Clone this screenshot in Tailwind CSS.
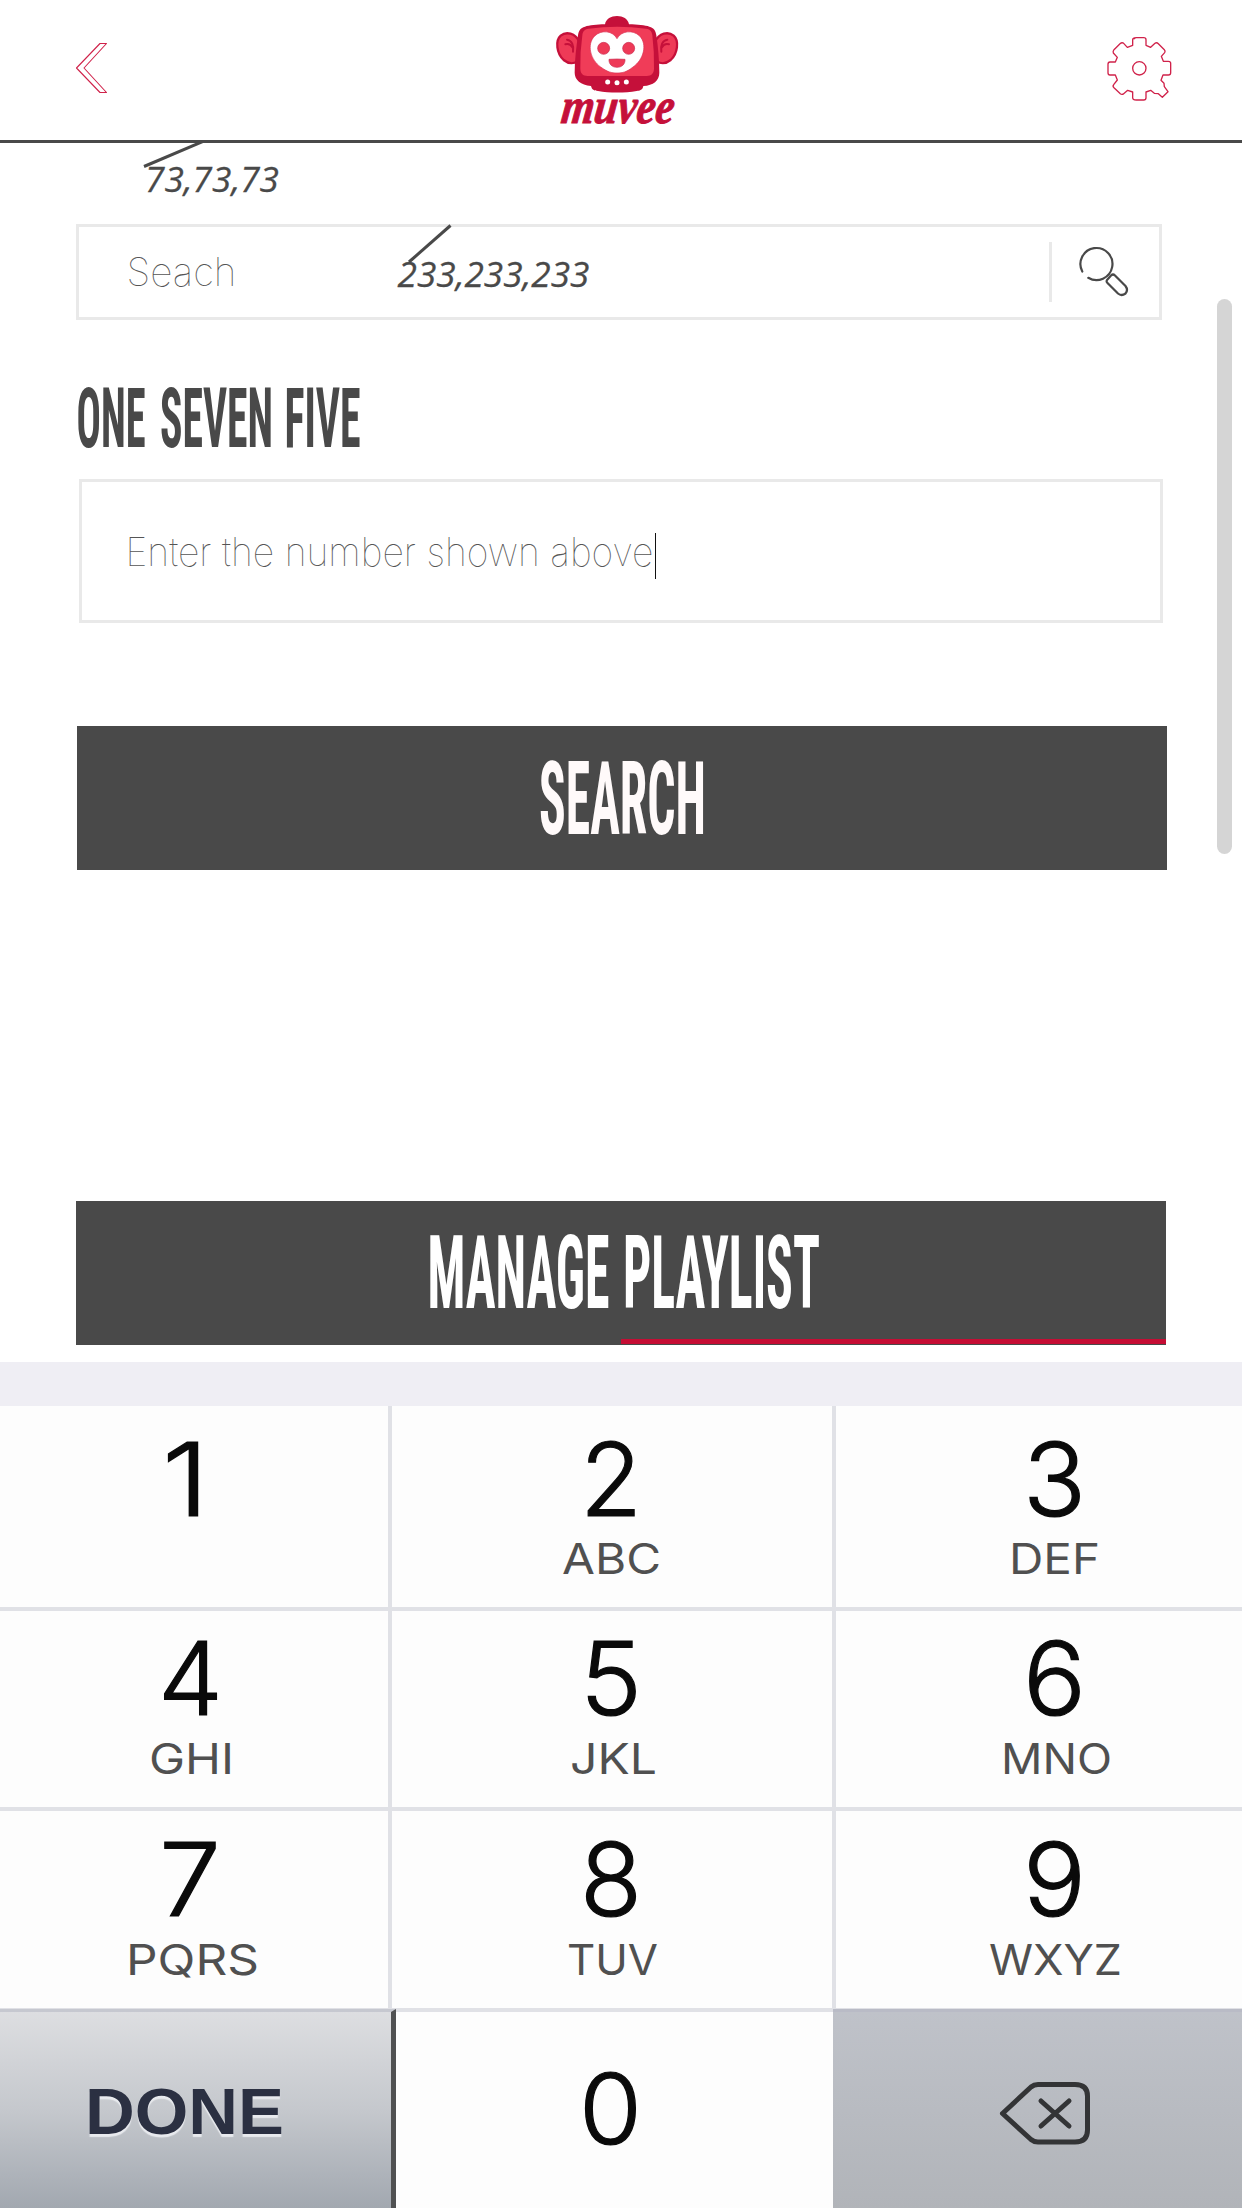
<!DOCTYPE html>
<html lang="en">
<head>
<meta charset="utf-8">
<title>muvee</title>
<script src="https://cdn.jsdelivr.net/npm/@tailwindcss/browser@4"></script>
</head>
<body class="bg-white">
<div class="relative flex h-[2208px] w-[1242px] flex-col overflow-hidden bg-white">

  <!-- Top bar -->
  <header class="flex h-[143px] shrink-0 items-start border-b-[3px] border-[#494949]">
    <svg class="ml-[74px] mt-[40px] h-[56px] w-[36px]" viewBox="74 40 36 56" fill="none" stroke="#d0224a" stroke-width="1.1" stroke-linejoin="round"><path d="M100 43.5H106.500L84 68L106.500 92.500H100L76.500 68Z"/></svg>
    <svg class="ml-[430px] h-[140px] w-[160px]" viewBox="0 0 480 420">
      <g fill="#ee3a57" stroke="#c5103a" stroke-width="7">
        <path d="M118 126C106 98 78 94 62 107C45 122 50 161 71 180C88 194 104 190 112 184Z"/>
        <path d="M345 126C357 98 385 94 401 107C418 122 413 161 392 180C375 194 359 190 351 184Z"/>
      </g>
      <g fill="none" stroke="#c5103a" stroke-width="6" stroke-linecap="round"><path d="M81 119C96 121 102 137 99 155M76 133C87 130 93 134 97 142"/><path d="M382 119C367 121 361 137 364 155M387 133C376 130 370 134 366 142"/></g>
      <path fill="#c5103a" d="M195 73C198 56 213 48 231 48S264 56 267 73C292 73 316 76 328 80C342 84 347 92 349 106C354 140 358 180 358 218C358 242 340 256 310 258C308 270 300 272 290 273C255 279 208 279 174 273C162 272 156 270 153 258C122 254 104 240 104 218C104 180 109 140 114 106C116 92 121 84 135 80C148 76 170 73 195 73Z"/>
      <path fill="#f03c58" d="M146 86Q231 74 318 86C332 88 336 96 337 106Q343 155 342 205C342 221 334 228 320 228H143C128 228 121 221 121 205Q120 155 127 106C128 96 132 88 146 86Z"/>
      <path fill="#fff" stroke="#d92d50" stroke-width="2" d="M231 116C218 92 185 89 165 107C138 133 152 180 182 201C203 216 214 219 231 219S260 216 279 201C310 180 324 133 298 107C278 89 244 92 231 116Z"/>
      <g fill="#ee3a57" stroke="#c92c50" stroke-width="2"><circle cx="191" cy="145" r="18"/><circle cx="266" cy="145" r="18"/><path d="M207 178Q231 176 255 178C256 193 245 202 231 202S206 193 207 178Z"/></g>
      <g fill="#fff"><circle cx="203" cy="246" r="7.500"/><circle cx="231" cy="248" r="7.500"/><circle cx="259" cy="246" r="7.500"/></g>
      <text transform="translate(60 370) skewX(-7)" font-family="Liberation Serif, serif" font-weight="bold" font-style="italic" font-size="150" fill="#c5103a" stroke="#c5103a" stroke-width="3" textLength="338" lengthAdjust="spacingAndGlyphs">muvee</text>
    </svg>
    <svg class="ml-[406px] mt-[34px] h-[70px] w-[70px]" viewBox="0 0 210 210" fill="none" stroke="#d0224a" stroke-width="4" stroke-linejoin="round"><path d="M85 16Q85 11 91 11H113Q120 11 120 17V34L134 40L147 28Q152 24 157 29L175 47Q179 51 176 56L166 67L172 82H187Q194 82 194 88V116Q194 123 187 123H171L165 139L174 148L175 158L186 173L169 190L157 179L145 178L134 169L120 174V191Q120 198 113 198H91Q80 198 80 191V174L65 169L53 179Q48 183 43 179L24 161Q19 156 23 152L34 138L28 123H12Q6 123 6 116V91Q6 84 12 84H28L34 70L22 57Q20 52 24 47L42 29Q48 24 53 28L64 40L80 34V17Q80 11 91 11"/><circle cx="100" cy="103" r="20"/></svg>
  </header>

  <main class="flex h-[1219px] shrink-0 flex-col pl-[76px]">
    <svg class="h-[81px] w-[300px]" viewBox="76 143 300 81">
      <path d="M144 166.500L204 141" stroke="#494949" stroke-width="3"/>
      <text x="145" y="192" font-family="Open Sans, sans-serif" font-style="italic" font-size="34.500" fill="#494949" stroke="#494949" stroke-width=".3" textLength="134" lengthAdjust="spacingAndGlyphs">73,73,73</text>
    </svg>

    <!-- Search field -->
    <div class="flex h-[96px] w-[1086px] items-center justify-between border-[3px] border-[#e9e9e9]">
      <svg class="h-[96px] w-[600px] overflow-visible" viewBox="79 224 600 96">
        <text x="126.500" y="286" font-family="Inter, sans-serif" font-weight="100" font-size="39.500" fill="#555" textLength="110" lengthAdjust="spacingAndGlyphs">Seach</text>
        <path d="M450.500 225.500L409 262" stroke="#494949" stroke-width="3"/>
        <text x="397.500" y="287" font-family="Open Sans, sans-serif" font-style="italic" font-size="34.500" fill="#494949" stroke="#494949" stroke-width=".3" textLength="192" lengthAdjust="spacingAndGlyphs">233,233,233</text>
      </svg>
      <div class="flex h-[60px] w-[110px] items-center border-l-[3px] border-[#e9e9e9]">
        <svg class="ml-[25px] h-[52px] w-[52px]" viewBox="1077 246 52 52" fill="none" stroke="#494949" stroke-width="2.200" stroke-linecap="round"><path d="M1082.300 271.500A16 16 0 1 1 1088.300 277.800"/><path stroke-linejoin="round" d="M1107 280L1111 275.500Q1113 273.500 1115 275.500L1125.500 286Q1128.500 290 1125.500 293.500Q1121.500 296.500 1118 293.500L1107.500 283Q1106 281.500 1107 280Z"/></svg>
      </div>
    </div>

    <svg class="h-[159px] w-[400px]" viewBox="76 320 400 159" font-family="Roboto, sans-serif" font-weight="700" font-size="84" fill="#494949">
      <g class="[font-stretch:75%]">
      <text x="76.500" y="447" textLength="69" lengthAdjust="spacingAndGlyphs">ONE</text>
      <text x="160" y="447" textLength="113" lengthAdjust="spacingAndGlyphs">SEVEN</text>
      <text x="284.500" y="447" textLength="76" lengthAdjust="spacingAndGlyphs">FIVE</text>
      </g>
    </svg>

    <!-- Number field -->
    <div class="ml-[3px] flex h-[144px] w-[1084px] items-center border-[3px] border-[#e9e9e9]">
      <svg class="h-[138px] w-[620px]" viewBox="82 482 620 138">
        <text x="125.500" y="566" font-family="Inter, sans-serif" font-weight="100" font-size="39.500" fill="#555" textLength="528" lengthAdjust="spacingAndGlyphs">Enter the number shown above</text>
        <rect x="655" y="533" width="1" height="46" fill="#111"/>
      </svg>
    </div>

    <button class="ml-px mt-[103px] block h-[144px] w-[1090px] bg-[#494949]">
      <svg class="h-[144px] w-[1090px]" viewBox="77 726 1090 144"><text class="[font-stretch:75%]" x="539" y="834" font-family="Roboto, sans-serif" font-weight="700" font-size="102" fill="#fffafa" textLength="167" lengthAdjust="spacingAndGlyphs">SEARCH</text></svg>
    </button>

    <button class="mt-[331px] block h-[144px] w-[1090px] bg-[#494949]">
      <svg class="h-[144px] w-[1090px]" viewBox="76 1201 1090 144" font-family="Roboto, sans-serif" font-weight="700" font-size="102" fill="#fff">
        <g class="[font-stretch:75%]">
        <text x="427.500" y="1307.500" textLength="182" lengthAdjust="spacingAndGlyphs">MANAGE</text>
        <text x="623" y="1307.500" textLength="197" lengthAdjust="spacingAndGlyphs">PLAYLIST</text>
        </g>
        <rect x="621" y="1339" width="545" height="5" fill="#c50d34"/>
      </svg>
    </button>
  </main>

  <!-- Scroll thumb over the page -->
  <div class="absolute left-[1217px] top-[299px] h-[555px] w-[15px] rounded-full bg-[#d5d5d5]"></div>

  <!-- Keypad -->
  <div class="h-[44px] shrink-0 bg-[#efeef4]"></div>
  <div id="pad" class="grid h-[802px] shrink-0 grid-cols-[392px_444px_406px] grid-rows-[205px_200px_201px_196px] bg-[#fdfdfd]"></div>
</div>
<script>
  // Each key: digit, left edge, width; letters, left edge, width
  const rows = [
    [1406, 205, 1515.5, 1574, [['1', 162, 47], ['2', 580, 62, 'ABC', 562, 99], ['3', 1023, 63, 'DEF', 1009, 91]]],
    [1611, 200, 1715, 1774, [['4', 158, 65, 'GHI', 149, 85], ['5', 580, 62, 'JKL', 570, 87], ['6', 1023, 63, 'MNO', 1001, 111]]],
    [1811, 201, 1915.5, 1975, [['7', 159, 62, 'PQRS', 126, 133], ['8', 580, 62, 'TUV', 567, 91], ['9', 1023, 63, 'WXYZ', 989, 133]]]
  ];
  const xs = [0, 392, 836], ws = [392, 444, 406];
  const edge = ['border-r-4', 'border-r-4', ''];
  const t = (s, x, y, w, size, weight, color, stroke = 0) => s ? `<text x="${x}" y="${y}" textLength="${w}" lengthAdjust="spacingAndGlyphs" font-size="${size}" font-weight="${weight}" fill="${color}" stroke="${color}" stroke-width="${stroke}">${s}</text>` : '';
  let html = '';
  rows.forEach(([top, h, by, ly, keys]) => keys.forEach((k, i) => {
    html += `<div class="${edge[i]} border-b-4 border-[#e0e1e6]"><svg class="block overflow-visible" width="${ws[i] - 4}" height="${h - 4}" viewBox="${xs[i]} ${top} ${ws[i] - 4} ${h - 4}" font-family="Inter, sans-serif">${t(k[0], k[1], by, k[2], 102, 300, '#0a0a0a', 1.2)}${t(k[3], k[4], ly, k[5], 42, 400, '#505050')}</svg></div>`;
  }));
  html += `<div class="z-10 -mr-[4px] -mt-[3px] border-r-[5px] border-t-[3px] border-r-[#505152] border-t-[#c6c8d0] bg-linear-to-b from-[#dddee1] via-[#c5c8cd] to-[#a2a8b0]"><svg class="block" width="391" height="196" viewBox="0 2012 391 196" font-family="Liberation Sans, sans-serif"><g class="[text-shadow:0_3px_1px_#e8eaee]">${t('DONE', 85, 2133.5, 199, 65, 700, '#2b3042')}</g></svg></div>`;
  html += `<div><svg class="block" width="442" height="196" viewBox="392 2012 442 196" font-family="Inter, sans-serif">${t('0', 579, 2144, 63, 98, 300, '#0a0a0a', 1.2)}</svg></div>`;
  html += `<div class="-ml-[3px] -mt-[3px] border-t-[3px] border-[#b9bbc6] bg-linear-to-b from-[#bfc2c9] to-[#b1b4b9]"><svg class="block" width="409" height="196" viewBox="833 2012 409 196" fill="none" stroke="#333436" stroke-width="5" stroke-linecap="round" stroke-linejoin="round"><path d="M1002.500 2113.500L1031 2087Q1034 2084.500 1038 2084.500H1075Q1087.500 2084.500 1087.500 2096V2130Q1087.500 2142 1075 2142H1038Q1034 2142 1031 2139.500Z"/><path d="M1041 2101L1069 2126M1069 2101L1041 2126"/></svg></div>`;
  document.getElementById('pad').innerHTML = html;
</script>
</body>
</html>
